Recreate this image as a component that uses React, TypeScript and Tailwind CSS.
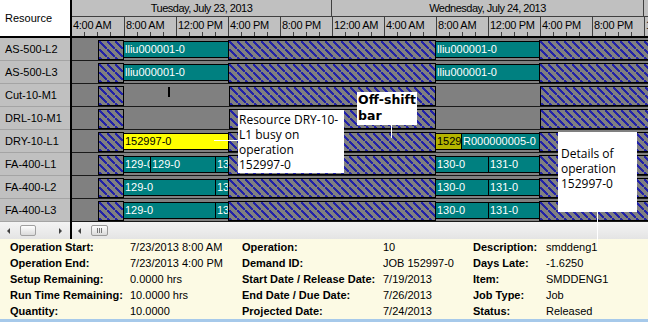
import React from 'react';

type Kind = 'hatch' | 'teal' | 'yellow' | 'olive';
type Seg = { from: number; to: number; kind: Kind; label?: string };
type ResRow = { name: string; segs: Seg[]; mark?: boolean };

// chart x offsets in px from Tuesday 4:00 AM (13px per hour)
const H1: Seg = { from: 26, to: 52, kind: 'hatch' };
const H2: Seg = { from: 157, to: 364, kind: 'hatch' };
const H3: Seg = { from: 468, to: 600, kind: 'hatch' };

const faWed: Seg[] = [
  { from: 364, to: 417, kind: 'teal', label: '130-0' },
  { from: 417, to: 468, kind: 'teal', label: '131-0' },
];

const rows: ResRow[] = [
  {
    name: 'AS-500-L2',
    segs: [H1, { from: 52, to: 157, kind: 'teal', label: 'lliu000001-0' }, H2,
      { from: 364, to: 468, kind: 'teal', label: 'lliu000001-0' }, H3],
  },
  {
    name: 'AS-500-L3',
    segs: [H1, { from: 52, to: 157, kind: 'teal', label: 'lliu000001-0' }, H2,
      { from: 364, to: 468, kind: 'teal', label: 'lliu000001-0' }, H3],
  },
  { name: 'Cut-10-M1', segs: [H1, H2, H3], mark: true },
  { name: 'DRL-10-M1', segs: [H1, H2, H3] },
  {
    name: 'DRY-10-L1',
    segs: [H1, { from: 52, to: 157, kind: 'yellow', label: '152997-0' }, H2,
      { from: 364, to: 390, kind: 'olive', label: '152997-0' },
      { from: 390, to: 468, kind: 'teal', label: 'R000000005-0' }, H3],
  },
  {
    name: 'FA-400-L1',
    segs: [H1, { from: 52, to: 79, kind: 'teal', label: '129-0' },
      { from: 79, to: 144, kind: 'teal', label: '129-0' },
      { from: 144, to: 157, kind: 'teal', label: '130-0' }, H2, ...faWed, H3],
  },
  {
    name: 'FA-400-L2',
    segs: [H1, { from: 52, to: 144, kind: 'teal', label: '129-0' },
      { from: 144, to: 157, kind: 'teal', label: '130-0' }, H2, ...faWed, H3],
  },
  {
    name: 'FA-400-L3',
    segs: [H1, { from: 52, to: 144, kind: 'teal', label: '129-0' },
      { from: 144, to: 157, kind: 'teal', label: '130-0' }, H2, ...faWed, H3],
  },
];

const times = ['4:00 AM', '8:00 AM', '12:00 PM', '4:00 PM', '8:00 PM', '12:00 AM',
  '4:00 AM', '8:00 AM', '12:00 PM', '4:00 PM', '8:00 PM', '12:00 AM'];

const kindClass: Record<Kind, string> = {
  hatch: 'mt-[2px] h-[20px] bg-[#808080] bg-[linear-gradient(45deg,transparent_43%,#2222a8_43%,#2222a8_57%,transparent_57%)] bg-[length:8px_8px]',
  teal: 'mt-[3px] h-[17px] bg-[#008080] text-white',
  yellow: 'mt-[3px] h-[17px] bg-[#ffff00] text-black',
  olive: 'mt-[3px] h-[17px] bg-[#b4b400] text-black',
};

const details: [string, string, string, string, string, string][] = [
  ['Operation Start:', '7/23/2013 8:00 AM', 'Operation:', '10', 'Description:', 'smddeng1'],
  ['Operation End:', '7/23/2013 4:00 PM', 'Demand ID:', 'JOB 152997-0', 'Days Late:', '-1.6250'],
  ['Setup Remaining:', '0.0000 hrs', 'Start Date / Release Date:', '7/19/2013', 'Item:', 'SMDDENG1'],
  ['Run Time Remaining:', '10.0000 hrs', 'End Date / Due Date:', '7/26/2013', 'Job Type:', 'Job'],
  ['Quantity:', '10.0000', 'Projected Date:', '7/24/2013', 'Status:', 'Released'],
];

export default function App() {
  return (
    <div className="relative w-[648px] h-[322px] overflow-hidden bg-white font-['Liberation_Sans',Arial,sans-serif] text-[11px] text-black">
      <div className="flex h-[222px]">
        <ResourceColumn/>
        <Chart/>
      </div>
      <ScrollBars/>
      <Details/>
      <Callouts/>
    </div>
  );
}

const ResourceColumn: React.FC = () => (
  <div className="flex w-[72px] shrink-0 flex-col border-r-2 border-black">
    <div className="flex h-[38px] shrink-0 items-center border-b-2 border-black bg-white pl-[5px]">Resource</div>
    {rows.map(r => (
      <div key={r.name} className="flex h-[23px] shrink-0 items-center border-b border-[#a4a4a4] bg-[#c0c0c0] pl-[5px]">
        {r.name}
      </div>
    ))}
  </div>
);

const Chart: React.FC = () => (
  <div className="flex min-w-0 flex-1 flex-col overflow-hidden">
    <div className="h-[38px] shrink-0 border-b-2 border-black bg-[#c0c0c0]">
      <div className="flex h-[17px] border-b border-[#404040] tracking-[-0.5px]">
        <div className="w-[260px] shrink-0 border-r border-[#404040] text-center leading-[16px]">Tuesday, July 23, 2013</div>
        <div className="w-[312px] shrink-0 border-r border-[#404040] text-center leading-[16px]">Wednesday, July 24, 2013</div>
      </div>
      <div className="flex h-[19px]">
        {times.map((t, i) => (
          <div key={i} className={i === 0 ? 'flex w-[52px] shrink-0 flex-col' : 'flex w-[52px] shrink-0 flex-col border-l border-[#404040]'}>
            <div className="flex-1 whitespace-nowrap pl-[1px] pt-[1px] leading-[14px] tracking-[-0.3px]">{t}</div>
            <div className="flex h-[4px]">
              <div className="w-[13px] border-r border-[#404040]"/>
              <div className="w-[13px] border-r border-[#404040]"/>
              <div className="w-[13px] border-r border-[#404040]"/>
            </div>
          </div>
        ))}
      </div>
    </div>
    {rows.map(r => <GanttRow key={r.name} row={r}/>)}
  </div>
);

const GanttRow: React.FC<{ row: ResRow }> = ({row}) => {
  const items = row.segs.map((s, i) => {
    const prevEnd = i === 0 ? 0 : row.segs[i - 1].to;
    return { s, gap: s.from - prevEnd, adjoin: i > 0 && s.from === prevEnd };
  });
  return (
    <div className="relative flex h-[23px] shrink-0 items-start border-b border-[#1a1a1a] bg-[#808080]">
      {items.map(({s, gap, adjoin}, i) => (
        <React.Fragment key={i}>
          {gap > 0 ? <div className="shrink-0" style={{width: gap}}/> : null}
          <div
            className={`${adjoin ? '-ml-px' : ''} ${kindClass[s.kind]} shrink-0 overflow-hidden whitespace-nowrap border border-black pl-[1px] leading-[15px]`}
            style={{width: s.to - s.from + (adjoin ? 1 : 0)}}>
            {s.label}
          </div>
        </React.Fragment>
      ))}
      {row.mark ? <div className="absolute left-[96px] top-[3px] h-[10px] w-[2px] bg-black"/> : null}
    </div>
  );
};

const ScrollBars: React.FC = () => (
  <div className="flex h-[17px] bg-gradient-to-b from-[#f4f4f4] to-[#e4e4e4]">
    <div className="flex w-[72px] shrink-0 items-center border-r-2 border-black">
      <div className="ml-[7px] h-0 w-0 border-y-[3px] border-r-[3px] border-y-transparent border-r-[#404040]"/>
      <div className="ml-[10px] flex h-[11px] w-[16px] rounded-[2px] border border-[#a0a0a0] bg-gradient-to-b from-white to-[#dadada]"/>
      <div className="ml-auto mr-[8px] h-0 w-0 border-y-[3px] border-l-[3px] border-y-transparent border-l-[#404040]"/>
    </div>
    <div className="flex flex-1 items-center">
      <div className="ml-[6px] h-0 w-0 border-y-[3px] border-r-[3px] border-y-transparent border-r-[#404040]"/>
      <div className="ml-[10px] flex h-[11px] w-[17px] items-center justify-center gap-[1px] rounded-[2px] border border-[#9a9a9a] bg-gradient-to-b from-white to-[#dadada]">
        <div className="h-[5px] w-px bg-[#777]"/>
        <div className="h-[5px] w-px bg-[#777]"/>
        <div className="h-[5px] w-px bg-[#777]"/>
      </div>
    </div>
  </div>
);

const Details: React.FC = () => (
  <div className="h-[83px] border-b-[3px] border-[#a6c9ea] bg-[#fcfae4] pl-[10px]">
    <div className="grid auto-rows-[16px] grid-cols-[120px_112px_141px_90px_73px_1fr] leading-[16px]">
      {details.map((d, i) => (
        <React.Fragment key={i}>
          <div className="whitespace-nowrap font-bold">{d[0]}</div>
          <div className="whitespace-nowrap">{d[1]}</div>
          <div className="whitespace-nowrap font-bold">{d[2]}</div>
          <div className="whitespace-nowrap">{d[3]}</div>
          <div className="whitespace-nowrap font-bold">{d[4]}</div>
          <div className="whitespace-nowrap">{d[5]}</div>
        </React.Fragment>
      ))}
    </div>
  </div>
);

const Callouts: React.FC = () => (
  <>
    <div className="absolute left-[214px] top-[140px] h-px w-[24px] bg-white"/>
    <div className="absolute left-[238px] top-[110px] h-[63px] w-[106px] whitespace-nowrap bg-white pl-[1px] pt-[2px] font-['Open_Sans',sans-serif] text-[12px] leading-[15px]">
      Resource DRY-10-<br/>L1 busy on<br/>operation<br/>152997-0
    </div>

    <div className="absolute left-[391px] top-[125px] h-[13px] w-px bg-white"/>
    <div className="absolute left-[357px] top-[92px] h-[33px] w-[60px] whitespace-nowrap bg-white pl-[1px] font-['DejaVu_Sans',sans-serif] text-[12.5px] font-bold leading-[16px]">
      Off-shift<br/>bar
    </div>

    <div className="absolute left-[597px] top-[212px] h-[37px] w-px bg-white"/>
    <div className="absolute left-[558px] top-[132px] h-[80px] w-[79px] whitespace-nowrap bg-white pl-[3px] pt-[14px] font-['Open_Sans',sans-serif] text-[12px] leading-[15px]">
      Details of<br/>operation<br/>152997-0
    </div>
  </>
);
